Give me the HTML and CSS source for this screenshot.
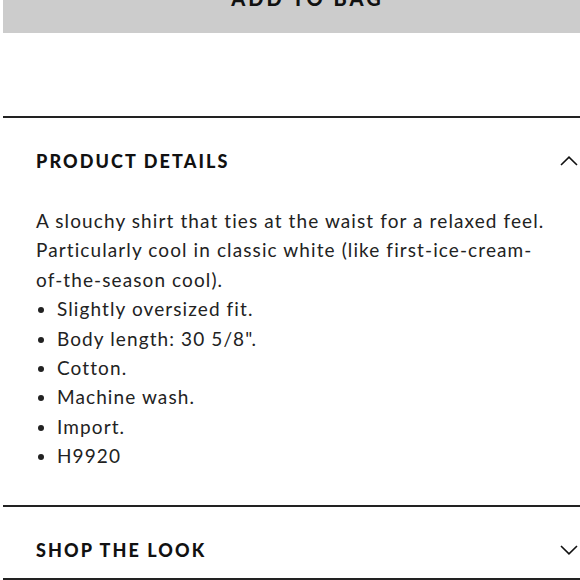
FILE: index.html
```html
<!DOCTYPE html>
<html lang="en">
<head>
  <meta charset="UTF-8" />
  <meta name="viewport" content="width=device-width, initial-scale=1" />
  <title>Product Details</title>
  <link rel="stylesheet" href="styles.css">
</head>
<body>
  <button class="add-btn" type="button">ADD TO BAG</button>

  <div class="accordion">
    <div class="acc-head">
      <h2>PRODUCT DETAILS</h2>
      <svg class="chev" width="18" height="10" viewBox="0 0 18 10"><polyline points="1,9 9,1.2 17,9" fill="none" stroke="#111" stroke-width="1.6"/></svg>
    </div>
    <div class="acc-body">
      <p>A slouchy shirt that ties at the waist for a relaxed feel. Particularly cool in classic white (like first-ice-cream-of-the-season cool).</p>
      <ul>
        <li>Slightly oversized fit.</li>
        <li>Body length: 30 5/8".</li>
        <li>Cotton.</li>
        <li>Machine wash.</li>
        <li>Import.</li>
        <li>H9920</li>
      </ul>
    </div>
  </div>

  <div class="accordion last">
    <div class="acc-head">
      <h2>SHOP THE LOOK</h2>
      <svg class="chev" width="18" height="10" viewBox="0 0 18 10"><polyline points="1,1 9,8.8 17,1" fill="none" stroke="#111" stroke-width="1.6"/></svg>
    </div>
  </div>
</body>
</html>
```

FILE: styles.css
```css
body {
  font-family: Lato, "Open Sans", sans-serif;
  background: #fff;
  color: #222;
  margin: 0;
  overflow: hidden;
}
.add-btn {
  display: block;
  width: calc(100% - 3px);
  height: 70px;
  margin: -37px 0 0 3px;
  padding: 0 0 0 32px;
  background: #cccccc;
  border: none;
  color: #111;
  font-family: Lato, sans-serif;
  font-weight: 900;
  font-size: 20px;
  letter-spacing: 3px;
}
.accordion {
  margin: 83px 0 0 3px;
  border-top: 2px solid #222;
}
.accordion.last {
  margin-top: 0;
  border-bottom: 2px solid #222;
}
.acc-head {
  display: flex;
  justify-content: space-between;
  align-items: center;
  padding: 33px 2px 18px 33px;
}
.acc-head h2 {
  margin: 0;
  font-size: 18px;
  line-height: 20px;
  font-weight: 900;
  letter-spacing: 2.1px;
  color: #111;
}
.acc-body {
  padding: 17px 0 34px 33px;
  font-size: 19px;
  line-height: 29.4px;
  letter-spacing: 1.1px;
}
.acc-body p {
  margin: 0;
  width: 515px;
}
.acc-body ul {
  margin: 0;
  padding-left: 21px;
}
```
